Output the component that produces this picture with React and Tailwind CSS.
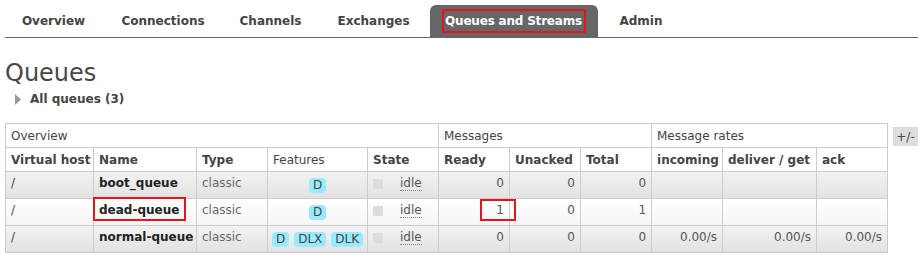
import React from 'react'

const tabs = [
    { label: 'Overview', w: 'w-[97px]' },
    { label: 'Connections', w: 'w-[112px]' },
    { label: 'Channels', w: 'w-[93px]' },
    { label: 'Exchanges', w: 'w-[103px]' },
    { label: 'Queues and Streams', w: 'w-[168px]', active: true },
    { label: 'Admin', w: 'w-[76px]' },
]

const queues = [
    { vhost: '/', name: 'boot_queue', features: ['D'], ready: 0, unacked: 0, total: 0, rates: null },
    { vhost: '/', name: 'dead-queue', features: ['D'], ready: 1, unacked: 0, total: 1, rates: null, marked: true },
    { vhost: '/', name: 'normal-queue', features: ['D', 'DLX', 'DLK'], ready: 0, unacked: 0, total: 0, rates: ['0.00/s', '0.00/s', '0.00/s'] },
]

const widths = [88, 103, 71, 100, 71, 71, 71, 71, 71, 94, 71]

const th = 'border border-[#ccc] px-[5px] h-[24px] text-left align-middle whitespace-nowrap'
const td = 'border border-[#ccc] px-[5px] pt-[4px] h-[27px] align-top whitespace-nowrap leading-[14px]'

const Badge = ({ label }) => (
    <span className="inline-block bg-[#99ebff] rounded-[4px] px-[4px] h-[15px] leading-[15px] text-[#444]">{label}</span>
)

const App = () => {
    return (
        <div className="px-[5px] bg-white text-[#444] text-[12px]" style={{ fontFamily: '"DejaVu Sans", Verdana, sans-serif' }}>
            <div className="flex border-b border-[#666] pt-[5px]">
                {tabs.map((t) => (
                    t.active ? (
                        <div key={t.label} className={t.w + ' mr-[5px] h-[32px] flex items-center justify-center bg-[#666] rounded-t-[6px]'}>
                            <span className="border-2 border-[#e8141c] h-[24px] pl-[1px] pr-[2px] flex items-center text-white font-bold tracking-[-0.2px]">{t.label}</span>
                        </div>
                    ) : (
                        <div key={t.label} className={t.w + ' mr-[5px] h-[32px] flex items-center justify-center font-bold text-[#444]'}>{t.label}</div>
                    )
                ))}
            </div>

            <h1 className="text-[24px] leading-[30px] mt-[20px] text-[#484848] font-normal">Queues</h1>
            <div className="flex items-center gap-[9px] pl-[10px] h-[16px] mt-[3px]">
                <svg width="6" height="11" viewBox="0 0 6 11"><path d="M0 0 L6 5.5 L0 11 Z" fill="#999" /></svg>
                <span className="font-bold">All queues (3)</span>
            </div>

            <div className="flex items-start mt-[16px]">
                <table className="table-fixed border-collapse w-[882px]">
                    <colgroup>
                        {widths.map((w, i) => <col key={i} style={{ width: w }} />)}
                    </colgroup>
                    <thead>
                        <tr>
                            <th colSpan={5} className={th + ' font-normal'}>Overview</th>
                            <th colSpan={3} className={th + ' font-normal'}>Messages</th>
                            <th colSpan={3} className={th + ' font-normal'}>Message rates</th>
                        </tr>
                        <tr>
                            <th className={th}>Virtual host</th>
                            <th className={th}>Name</th>
                            <th className={th}>Type</th>
                            <th className={th + ' font-normal'}>Features</th>
                            <th className={th}>State</th>
                            <th className={th}>Ready</th>
                            <th className={th}>Unacked</th>
                            <th className={th}>Total</th>
                            <th className={th}>incoming</th>
                            <th className={th}>deliver / get</th>
                            <th className={th}>ack</th>
                        </tr>
                    </thead>
                    <tbody>
                        {queues.map((q, i) => (
                            <tr key={q.name} className={i % 2 === 0 ? 'bg-gradient-to-b from-[#f3f3f3] to-[#e1e1e1]' : 'bg-gradient-to-b from-white to-[#f4f4f4]'}>
                                <td className={td}>{q.vhost}</td>
                                <td className={td + ' relative font-bold text-[#222]'}>
                                    {q.name}
                                    {q.marked && <span className="absolute left-[-1px] top-[-2px] w-[93px] h-[24px] border-2 border-[#e8141c]" />}
                                </td>
                                <td className={td + ' text-[#666]'}>classic</td>
                                <td className={td + ' text-center'}>
                                    <div className="flex justify-center gap-[5px] mt-[2px]">
                                        {q.features.map((f) => <Badge key={f} label={f} />)}
                                    </div>
                                </td>
                                <td className={td}>
                                    <div className="flex items-center h-[15px]">
                                        <span className="w-[10px] h-[10px] bg-[#ddd] mr-[17px]" />
                                        <span className="text-[#555] border-b border-dotted border-[#888] leading-[13px]">idle</span>
                                    </div>
                                </td>
                                <td className={td + ' relative text-right text-[#555]'}>
                                    {q.ready}
                                    {q.marked && <span className="absolute left-[41px] top-0 w-[36px] h-[22px] border-2 border-[#e8141c]" />}
                                </td>
                                <td className={td + ' text-right text-[#555]'}>{q.unacked}</td>
                                <td className={td + ' text-right text-[#555]'}>{q.total}</td>
                                {[0, 1, 2].map((k) => (
                                    <td key={k} className={td + ' text-right text-[#555]'}>{q.rates ? q.rates[k] : ''}</td>
                                ))}
                            </tr>
                        ))}
                    </tbody>
                </table>
                <span className="ml-[5px] mt-[4px] bg-[#ddd] w-[27px] h-[19px] flex items-center justify-center text-[#444]">+/-</span>
            </div>
        </div>
    )
}

export default App
